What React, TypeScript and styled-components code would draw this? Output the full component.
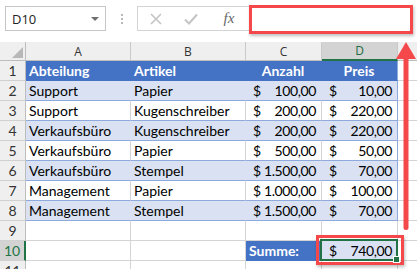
import React from 'react'
import styled, { createGlobalStyle, css } from 'styled-components'

type Tone = 'blank' | 'head' | 'band' | 'plain'

const rows = [
  ['Support', 'Papier', '100,00', '10,00'],
  ['Support', 'Kugenschreiber', '200,00', '220,00'],
  ['Verkaufsbüro', 'Kugenschreiber', '200,00', '220,00'],
  ['Verkaufsbüro', 'Papier', '500,00', '50,00'],
  ['Verkaufsbüro', 'Stempel', '1.500,00', '70,00'],
  ['Management', 'Papier', '1.000,00', '100,00'],
  ['Management', 'Stempel', '1.500,00', '70,00'],
]

const App = () => {
  return (
    <Window>
      <GlobalStyle />
      <FormulaBar>
        <NameBox>
          D10
          <Caret />
        </NameBox>
        <Grip>
          <span />
          <span />
          <span />
        </Grip>
        <Buttons>
          <IconSlot>
            <svg width="12" height="12" viewBox="0 0 12 12">
              <path d="M1 1 L11 11 M11 1 L1 11" stroke="#c4c4c4" strokeWidth="1.6" fill="none" />
            </svg>
          </IconSlot>
          <IconSlot>
            <svg width="14" height="12" viewBox="0 0 14 12">
              <path d="M1 6.5 L5 10.5 L13 1.5" stroke="#c4c4c4" strokeWidth="2" fill="none" />
            </svg>
          </IconSlot>
          <Fx>fx</Fx>
        </Buttons>
        <FormulaInput />
      </FormulaBar>

      <Sheet>
        <Corner />
        <ColHead>A</ColHead>
        <ColHead>B</ColHead>
        <ColHead>C</ColHead>
        <ColHead $active>D</ColHead>
        <ColHead />

        <RowHead>1</RowHead>
        <Cell $tone="head">Abteilung</Cell>
        <Cell $tone="head">Artikel</Cell>
        <Cell $tone="head" $center>Anzahl</Cell>
        <Cell $tone="head" $center $edge>Preis</Cell>
        <Cell $tone="blank" />

        {rows.map((r, i) => {
          const tone: Tone = i % 2 === 0 ? 'band' : 'plain'
          return (
            <React.Fragment key={i}>
              <RowHead>{i + 2}</RowHead>
              <Cell $tone={tone}>{r[0]}</Cell>
              <Cell $tone={tone}>{r[1]}</Cell>
              <Cell $tone={tone} $money>
                <span>$</span>
                <Amount>{r[2]}</Amount>
              </Cell>
              <Cell $tone={tone} $money $edge>
                <span>$</span>
                <Amount>{r[3]}</Amount>
              </Cell>
              <Cell $tone="blank" />
            </React.Fragment>
          )
        })}

        <RowHead>9</RowHead>
        <Cell $tone="blank" />
        <Cell $tone="blank" />
        <Cell $tone="blank" />
        <Cell $tone="blank" />
        <Cell $tone="blank" />

        <RowHead $active>10</RowHead>
        <Cell $tone="blank" />
        <Cell $tone="blank" />
        <Cell $tone="head">Summe:</Cell>
        <Cell $tone="band" $money $selected>
          <span>$</span>
          <Amount>740,00</Amount>
        </Cell>
        <Cell $tone="blank" />

        <RowHead>11</RowHead>
        <Cell $tone="blank" />
        <Cell $tone="blank" />
        <Cell $tone="blank" />
        <Cell $tone="blank" />
        <Cell $tone="blank" />
      </Sheet>

      <Highlight />
      <Arrow width="22" height="192" viewBox="0 0 22 192">
        <path d="M10 0 L20 17 L0 17 Z" fill="#f4484b" />
        <rect x="7.5" y="14" width="5" height="174" rx="2.5" fill="#f4484b" />
      </Arrow>
    </Window>
  )
}

export default App

const GlobalStyle = createGlobalStyle`
  html, body {
    margin: 0;
    padding: 0;
    background: #fff;
  }
  body {
    font-family: Lato, "Noto Sans", sans-serif;
  }
`

const Window = styled.div`
  position: relative;
  width: 417px;
  height: 269px;
  overflow: hidden;
  background: #fff;
`

const FormulaBar = styled.div`
  display: flex;
  align-items: flex-start;
  height: 42px;
  box-sizing: border-box;
  padding: 6px 0 0 5px;
`

const NameBox = styled.div`
  box-sizing: border-box;
  width: 101px;
  height: 25px;
  border: 1px solid #c6c6c6;
  display: flex;
  align-items: center;
  justify-content: space-between;
  padding: 0 6px 0 6px;
  font: 13px "Open Sans", sans-serif;
  color: #222;
`

const Caret = styled.span`
  width: 0;
  height: 0;
  border-left: 4px solid transparent;
  border-right: 4px solid transparent;
  border-top: 4px solid #707070;
`

const Grip = styled.div`
  width: 31px;
  height: 25px;
  display: flex;
  flex-direction: column;
  align-items: center;
  justify-content: center;
  gap: 2px;
  span {
    width: 2px;
    height: 2px;
    background: #b9b9b9;
  }
`

const Buttons = styled.div`
  box-sizing: border-box;
  width: 112px;
  height: 25px;
  border: 1px solid #d4d4d4;
  border-right: none;
  display: flex;
  align-items: center;
  gap: 11px;
  padding-left: 6px;
`

const IconSlot = styled.div`
  width: 24px;
  display: flex;
  justify-content: center;
`

const Fx = styled.span`
  width: 24px;
  margin-left: 3px;
  text-align: center;
  font: italic 15px "Liberation Serif", serif;
  color: #666;
`

const FormulaInput = styled.div`
  box-sizing: border-box;
  width: 164px;
  height: 29px;
  margin-top: -1px;
  border: 3px solid #f4484b;
  background: #fff;
  box-shadow: 1px 2px 3px rgba(0, 0, 0, 0.25);
`

const Sheet = styled.div`
  display: grid;
  grid-template-columns: 26px 105px 115px 76px 76px 40px;
  grid-template-rows: 19px repeat(11, 20px);
`

const Corner = styled.div`
  box-sizing: border-box;
  position: relative;
  background: #efefef;
  border-right: 1px solid #bdbdbd;
  border-bottom: 1px solid #bdbdbd;
  &::after {
    content: '';
    position: absolute;
    right: 2px;
    bottom: 2px;
    border-left: 11px solid transparent;
    border-bottom: 11px solid #b8b8b8;
  }
`

const ColHead = styled.div<{ $active?: boolean }>`
  box-sizing: border-box;
  display: flex;
  align-items: center;
  justify-content: center;
  background: #efefef;
  border-right: 1px solid #c9c9c9;
  border-bottom: 1px solid #bdbdbd;
  font: 12px "Open Sans", sans-serif;
  color: #333;
  ${p =>
    p.$active &&
    css`
      background: #d3d3d3;
      color: #1d6a3f;
      border-bottom: 2px solid #217346;
    `}
`

const RowHead = styled.div<{ $active?: boolean }>`
  box-sizing: border-box;
  display: flex;
  align-items: center;
  justify-content: center;
  background: #efefef;
  border-right: 1px solid #bdbdbd;
  border-bottom: 1px solid #d0d0d0;
  font: 14px Lato, sans-serif;
  color: #333;
  ${p =>
    p.$active &&
    css`
      background: #d3d3d3;
      color: #217346;
      border-right: 2px solid #217346;
    `}
`

const Amount = styled.span`
  letter-spacing: -0.4px;
`

const Cell = styled.div<{ $tone: Tone; $center?: boolean; $money?: boolean; $edge?: boolean; $selected?: boolean }>`
  box-sizing: border-box;
  position: relative;
  display: flex;
  align-items: center;
  padding: 0 4px 0 3px;
  font-size: 14px;
  color: #000;
  white-space: nowrap;
  border-right: 1px solid #d4d4d4;
  border-bottom: 1px solid #d4d4d4;
  ${p =>
    p.$tone === 'head' &&
    css`
      background: #4472c4;
      color: #fff;
      font-weight: 700;
      border-color: #4472c4;
    `}
  ${p =>
    p.$tone === 'band' &&
    css`
      background: #d9e1f2;
      border-right-color: #d9e1f2;
      border-bottom-color: #8ea9db;
    `}
  ${p =>
    p.$tone === 'plain' &&
    css`
      border-bottom-color: #8ea9db;
    `}
  ${p => p.$center && css`justify-content: center;`}
  ${p =>
    p.$money &&
    css`
      justify-content: space-between;
      padding: 0 5px 0 7px;
    `}
  ${p => p.$edge && css`border-right-color: #8ea9db;`}
  ${p =>
    p.$selected &&
    css`
      &::after {
        content: '';
        position: absolute;
        inset: -2px -1px -1px -2px;
        border: 2px solid #217346;
      }
      &::before {
        content: '';
        position: absolute;
        right: -3px;
        bottom: -3px;
        width: 5px;
        height: 5px;
        background: #217346;
        border: 1px solid #fff;
        z-index: 1;
      }
    `}
`

const Highlight = styled.div`
  position: absolute;
  left: 316px;
  top: 235px;
  width: 88px;
  height: 30px;
  box-sizing: border-box;
  border: 3px solid #f4484b;
  box-shadow: 1px 2px 3px rgba(0, 0, 0, 0.25);
`

const Arrow = styled.svg`
  position: absolute;
  left: 396px;
  top: 42px;
`
